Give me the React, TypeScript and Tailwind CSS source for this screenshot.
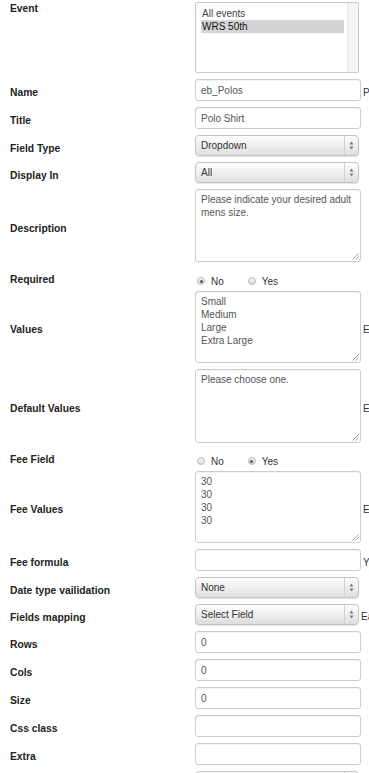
import React from "react";

const font = { fontFamily: '"Liberation Sans", Arial, Helvetica, sans-serif' };

function Label({ children, top }: { children: React.ReactNode; top?: boolean }) {
  return (
    <div
      className={
        "w-[195px] shrink-0 pl-[10px] text-[10.3px] leading-[13px] font-bold text-[#222] " +
        (top ? "self-start" : "pt-[5px]")
      }
    >
      {children}
    </div>
  );
}

function Help({ children }: { children: React.ReactNode }) {
  return (
    <span className="ml-[2px] whitespace-nowrap pt-[4px] text-[10px] leading-[13px] text-[#333]">
      {children}
    </span>
  );
}

function Input({ value, h = "h-[22px]" }: { value?: string; h?: string }) {
  return (
    <div
      className={
        "flex w-[166px] shrink-0 items-center rounded-[3px] border border-[#cccccc] bg-white pl-[5px] text-[10px] text-[#555] shadow-[inset_0_1px_1px_rgba(0,0,0,0.06)] " +
        h
      }
    >
      {value}
    </div>
  );
}

function Select({ value, h = "h-[21px]" }: { value: string; h?: string }) {
  return (
    <div
      className={
        "flex w-[164px] shrink-0 items-stretch rounded-[4px] border border-[#c4c4c4] bg-gradient-to-b from-[#fdfdfd] via-[#efefef] to-[#dedede] text-[10px] text-[#333] shadow-[0_1px_1px_rgba(0,0,0,0.12)] " +
        h
      }
    >
      <div className="flex flex-1 items-center pl-[5px]">{value}</div>
      <div className="flex w-[14px] items-center justify-center border-l border-[#d0d0d0]">
        <svg width="5" height="9" viewBox="0 0 5 9">
          <path d="M2.5 0.5 L4.5 3.5 L0.5 3.5 Z" fill="#777" />
          <path d="M2.5 8.5 L4.5 5.5 L0.5 5.5 Z" fill="#777" />
        </svg>
      </div>
    </div>
  );
}

function TextArea({ lines, h }: { lines: string[]; h: string }) {
  return (
    <div
      className={
        "relative w-[166px] shrink-0 rounded-[3px] border border-[#cccccc] bg-white pl-[5px] pt-[3px] text-[10px] leading-[13px] text-[#555] shadow-[inset_0_1px_1px_rgba(0,0,0,0.06)] " +
        h
      }
    >
      {lines.map((l, i) => (
        <div key={i}>{l}</div>
      ))}
      <svg className="absolute bottom-[1px] right-[1px]" width="7" height="7" viewBox="0 0 7 7">
        <path d="M6.5 0.5 L0.5 6.5 M6.5 3.5 L3.5 6.5" stroke="#888" strokeWidth="0.8" />
      </svg>
    </div>
  );
}

function Radio({ checked, label }: { checked?: boolean; label: string }) {
  return (
    <div className="flex items-center gap-[6px]">
      <div className="flex h-[8px] w-[8px] items-center justify-center rounded-full border border-[#b9b9b9] bg-gradient-to-b from-[#f4f4f4] to-[#dcdcdc]">
        {checked && <div className="h-[3px] w-[3px] rounded-full bg-[#555]" />}
      </div>
      <span className="text-[10px] text-[#333]">{label}</span>
    </div>
  );
}

function Row({
  children,
  label,
  className = "",
  top,
}: {
  children: React.ReactNode;
  label: string;
  className?: string;
  top?: boolean;
}) {
  return (
    <div className={"flex " + (top ? "items-start " : "items-center ") + className}>
      <Label top={top}>{label}</Label>
      {children}
    </div>
  );
}

export default function App() {
  return (
    <div className="h-[773px] w-[369px] overflow-hidden bg-white" style={font}>
      <div className="flex flex-col gap-[6px] pt-[2px]">
        <Row label="Event" top>
          <div className="flex h-[71px] w-[164px] shrink-0 overflow-hidden rounded-[2px] border border-[#c8c8c8] bg-white text-[10px] leading-[13px]">
            <div className="flex-1 pl-[5px] pr-[3px] pt-[4px]">
              <div className="pl-[1px] text-[#444]">All events</div>
              <div className="bg-[#d4d4d4] pl-[1px] text-[#111]">WRS 50th</div>
            </div>
            <div className="w-[11px] border-l border-[#e6e6e6] bg-[#f4f4f4]" />
          </div>
        </Row>
        <Row label="Name">
          <Input value="eb_Polos" />
          <Help>Please use only lowercase letters</Help>
        </Row>
        <Row label="Title">
          <Input value="Polo Shirt" />
        </Row>
        <Row label="Field Type">
          <Select value="Dropdown" />
        </Row>
        <Row label="Display In">
          <Select value="All" />
        </Row>
        <Row label="Description">
          <TextArea h="h-[73px]" lines={["Please indicate your desired adult", "mens size."]} />
        </Row>
        <Row label="Required" className="h-[17px]">
          <div className="flex items-center gap-[24px] pl-[2px] pt-[9px]">
            <Radio checked label="No" />
            <Radio label="Yes" />
          </div>
        </Row>
        <Row label="Values">
          <TextArea h="h-[72px]" lines={["Small", "Medium", "Large", "Extra Large"]} />
          <Help>Each value on one line</Help>
        </Row>
        <Row label="Default Values">
          <TextArea h="h-[74px]" lines={["Please choose one."]} />
          <Help>Each value on one line</Help>
        </Row>
        <Row label="Fee Field" className="h-[16px]">
          <div className="flex items-center gap-[24px] pl-[2px] pt-[8px]">
            <Radio label="No" />
            <Radio checked label="Yes" />
          </div>
        </Row>
        <Row label="Fee Values">
          <TextArea h="h-[72px]" lines={["30", "30", "30", "30"]} />
          <Help>Each value on one line</Help>
        </Row>
        <Row label="Fee formula">
          <Input />
          <Help>You can use fields</Help>
        </Row>
        <Row label="Date type vailidation">
          <Select value="None" />
        </Row>
        <Row label="Fields mapping">
          <Select value="Select Field" />
          <Help>Each field</Help>
        </Row>
        <Row label="Rows">
          <Input value="0" />
        </Row>
        <Row label="Cols">
          <Input value="0" />
        </Row>
        <Row label="Size">
          <Input value="0" />
        </Row>
        <Row label="Css class">
          <Input />
        </Row>
        <Row label="Extra">
          <Input />
        </Row>
        <Row label="">
          <Select value="" />
        </Row>
      </div>
    </div>
  );
}
